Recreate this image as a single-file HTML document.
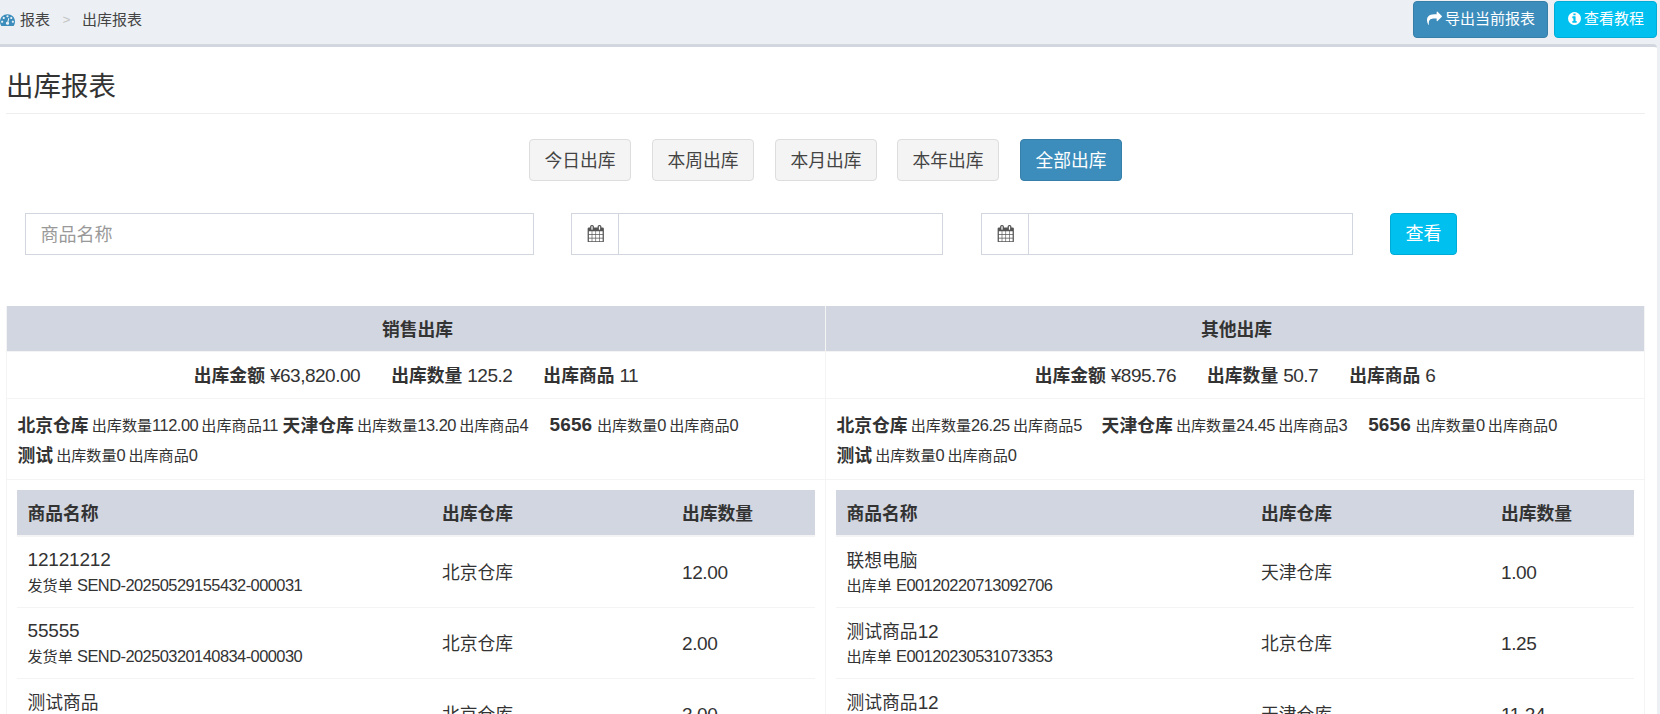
<!DOCTYPE html>
<html lang="zh-CN">
<head>
<meta charset="utf-8">
<title>出库报表</title>
<style>
*{box-sizing:border-box;}
html,body{margin:0;padding:0;}
body{width:1660px;height:714px;overflow:hidden;background:#ecf0f5;color:#333;
  font-family:"Liberation Sans","Noto Sans CJK SC",sans-serif;font-size:17.8px;position:relative;}
.abs{position:absolute;}
/* top bar */
#topbar{position:absolute;left:0;top:0;width:1660px;height:44px;background:#ecf0f5;}
#crumb{position:absolute;left:0;top:0;height:40px;line-height:40px;font-size:15px;color:#444;white-space:nowrap;}
#crumb span{position:absolute;top:0;}
.tbtn{position:absolute;top:1px;height:37px;border-radius:4px;color:#fff;font-size:15px;line-height:35px;white-space:nowrap;border:1px solid transparent;}
#b1{left:1413px;width:135px;background:#3c8dbc;border-color:#367fa9;}
#b2{left:1554px;width:103px;background:#00c0ef;border-color:#00acd6;}
/* content */
#content{position:absolute;left:0;top:44px;width:1657px;height:680px;background:#fff;border-top:3px solid #d2d6de;border-top-right-radius:4px;}
#title{position:absolute;left:6px;top:68px;font-size:27.5px;line-height:38px;color:#333;white-space:nowrap;}
#hr{position:absolute;left:6px;top:113px;width:1639px;height:1px;background:#eee;}
.fbtn{position:absolute;top:139px;width:102px;height:42px;border:1px solid #ddd;border-radius:4px;background:#f4f4f4;color:#444;font-size:17.8px;line-height:42px;text-align:center;white-space:nowrap;}
.fbtn.on{background:#3c8dbc;border-color:#367fa9;color:#fff;}
.inp{position:absolute;top:213px;height:42px;border:1px solid #d2d6de;background:#fff;}
.addon{position:absolute;top:213px;height:42px;width:48px;border:1px solid #d2d6de;border-right:0;background:#fff;}
#go{position:absolute;left:1390px;top:213px;width:67px;height:42px;border-radius:4px;background:#00c0ef;border:1px solid #00acd6;color:#fff;font-size:18px;line-height:40px;text-align:center;}
/* tables */
.panel{position:absolute;top:306px;height:420px;background:#fff;}
.ph{position:absolute;left:0;top:0;width:100%;padding-left:3px;height:46px;border-bottom:1px solid #f4f4f4;background:#d2d6e0;font-weight:bold;font-size:17.8px;line-height:48px;text-align:center;color:#333;}
.sum{position:absolute;left:0;top:47px;width:100%;height:46px;line-height:46px;text-align:center;font-size:17.8px;white-space:nowrap;}
i{font-style:normal;font-size:1.07em;letter-spacing:-.4px;} .sum i{letter-spacing:-.5px;}
.sum .g{display:inline-block;width:31px;}
.line{position:absolute;left:0;width:100%;height:1px;background:#f4f4f4;}
.vl{position:absolute;top:306px;width:1px;height:420px;background:#f4f4f4;}
.wh{position:absolute;font-size:15.1px;word-spacing:-1px;line-height:30px;white-space:nowrap;}
.wh b{font-size:17.8px;position:relative;top:.8px;} .wh i{font-size:1.09em;letter-spacing:-.5px;} .wh b.n{font-size:19px;letter-spacing:.1px;margin-right:1.5px;top:-.3px;}
.it{position:absolute;left:10px;top:184px;right:10px;height:240px;}
.ith{position:absolute;left:0;top:0;width:100%;height:47px;box-sizing:border-box;border-bottom:2px solid #f4f4f4;background:#d2d6e0;font-weight:bold;line-height:49px;}
.ith span,.row span{position:absolute;white-space:nowrap;}
.row{position:absolute;left:0;width:100%;height:71px;border-top:1px solid #f4f4f4;}
.c1{left:10.5px;} .c2{left:425px;} .c3{left:665px;}
.row .n{top:9.5px;line-height:25px;} .row .k{top:12.4px;} .row .k2{top:11.2px;} .row .c3.m{top:22.7px;} .row .k i{letter-spacing:0;}
.row .s{top:36.7px;font-size:15.1px;line-height:22px;} .row .s i{font-size:1.09em;letter-spacing:-.55px;} .row .n i{letter-spacing:-.2px;}
.row .m{top:24px;line-height:25px;}
</style>
</head>
<body>
<div id="topbar">
  <div id="crumb">
    <svg class="abs" style="left:0;top:11.9px" width="15" height="15" viewBox="0 0 1792 1792"><path fill="#3c8dbc" d="M384 1152q0-53-37.500-90.500t-90.500-37.500-90.500 37.500-37.500 90.500 37.500 90.500 90.500 37.500 90.500-37.500 37.500-90.500zm192-448q0-53-37.500-90.500t-90.500-37.500-90.500 37.500-37.500 90.500 37.500 90.500 90.500 37.500 90.500-37.500 37.500-90.500zm428 481l101-382q6-26-7.500-48.500t-38.500-29.500-48 6.500-30 39.500l-101 382q-60 5-107 43.500t-63 98.500q-20 77 20 146t117 89 146-20 89-117q16-60-6-117t-72-91zm660-33q0-53-37.500-90.500t-90.500-37.500-90.500 37.500-37.500 90.500 37.500 90.500 90.500 37.500 90.500-37.500 37.500-90.500zm-640-640q0-53-37.500-90.500t-90.500-37.500-90.500 37.500-37.500 90.500 37.500 90.500 90.500 37.500 90.500-37.500 37.500-90.500zm448 192q0-53-37.500-90.500t-90.500-37.500-90.500 37.500-37.500 90.500 37.500 90.500 90.500 37.500 90.500-37.500 37.500-90.500zm320 448q0 261-141 483-19 29-54 29h-1402q-35 0-54-29-141-221-141-483 0-182 71-348t191-286 286-191 348-71 348 71 286 191 191 286 71 348z"/></svg>
    <span style="left:20px">报表</span>
    <span style="left:62.5px;color:#c4c4c4;font-size:13.5px;">&gt;</span>
    <span style="left:82px">出库报表</span>
  </div>
  <div class="tbtn" id="b1"><svg class="abs" style="left:13.2px;top:8.8px" width="15" height="15" viewBox="0 0 1792 1792"><path fill="#fff" d="M1792 640q0 26-19 45l-512 512q-19 19-45 19t-45-19-19-45v-256h-224q-98 0-175.500 6t-154 21.500-133 42.500-105.500 69.500-80 101-48.500 138.500-17.500 181q0 55 5 123 0 6 2.500 23.500t2.500 26.500q0 15-8.500 25t-23.500 10q-16 0-28-17-7-9-13-22t-13.500-30-10.500-24q-127-285-127-451 0-199 53-333 162-403 875-403h224v-256q0-26 19-45t45-19 45 19l512 512q19 19 19 45z"/></svg><span class="abs" style="left:31px;top:-1px">导出当前报表</span></div>
  <div class="tbtn" id="b2"><svg class="abs" style="left:12.0px;top:8.9px" width="15" height="15" viewBox="0 0 1792 1792"><path fill="#fff" d="M1152 1376v-160q0-14-9-23t-23-9h-96v-512q0-14-9-23t-23-9h-320q-14 0-23 9t-9 23v160q0 14 9 23t23 9h96v320h-96q-14 0-23 9t-9 23v160q0 14 9 23t23 9h448q14 0 23-9t9-23zm-128-896v-160q0-14-9-23t-23-9h-192q-14 0-23 9t-9 23v160q0 14 9 23t23 9h192q14 0 23-9t9-23zm640 416q0 209-103 385.500t-279.500 279.500-385.500 103-385.500-103-279.500-279.500-103-385.500 103-385.500 279.500-279.500 385.500-103 385.500 103 279.500 279.500 103 385.500z"/></svg><span class="abs" style="left:29px;top:-1px">查看教程</span></div>
</div>
<div id="content"></div>
<div id="title">出库报表</div>
<div id="hr"></div>

<div class="fbtn" style="left:529px">今日出库</div>
<div class="fbtn" style="left:652px">本周出库</div>
<div class="fbtn" style="left:775px">本月出库</div>
<div class="fbtn" style="left:897px">本年出库</div>
<div class="fbtn on" style="left:1020px">全部出库</div>

<div class="inp" style="left:25px;width:509px;"><span class="abs" style="left:14.5px;top:1px;line-height:40px;color:#999;font-size:18px;white-space:nowrap;">商品名称</span></div>
<div class="addon" style="left:571px"><svg class="abs" style="left:14.75px;top:10.7px" width="17.5" height="17.5" viewBox="0 0 1792 1792"><path fill="#555" d="M192 1664h288v-288h-288v288zm352 0h320v-288h-320v288zm-352-352h288v-320h-288v320zm352 0h320v-320h-320v320zm-352-384h288v-288h-288v288zm736 736h320v-288h-320v288zm-384-736h320v-288h-320v288zm768 736h288v-288h-288v288zm-384-352h320v-320h-320v320zm-352-864v-288q0-13-9.500-22.500t-22.500-9.500h-64q-13 0-22.500 9.500t-9.500 22.500v288q0 13 9.500 22.500t22.500 9.500h64q13 0 22.500-9.500t9.500-22.500zm736 864h288v-320h-288v320zm-384-384h320v-288h-320v288zm384 0h288v-288h-288v288zm32-480v-288q0-13-9.500-22.500t-22.500-9.500h-64q-13 0-22.500 9.500t-9.500 22.500v288q0 13 9.500 22.500t22.500 9.500h64q13 0 22.500-9.500t9.500-22.500zm384-64v1280q0 52-38 90t-90 38h-1408q-52 0-90-38t-38-90v-1280q0-52 38-90t90-38h128v-96q0-66 47-113t113-47h64q66 0 113 47t47 113v96h384v-96q0-66 47-113t113-47h64q66 0 113 47t47 113v96h128q52 0 90 38t38 90z"/></svg></div><div class="inp" style="left:618px;width:325px;"></div>
<div class="addon" style="left:981px"><svg class="abs" style="left:14.75px;top:10.7px" width="17.5" height="17.5" viewBox="0 0 1792 1792"><path fill="#555" d="M192 1664h288v-288h-288v288zm352 0h320v-288h-320v288zm-352-352h288v-320h-288v320zm352 0h320v-320h-320v320zm-352-384h288v-288h-288v288zm736 736h320v-288h-320v288zm-384-736h320v-288h-320v288zm768 736h288v-288h-288v288zm-384-352h320v-320h-320v320zm-352-864v-288q0-13-9.500-22.500t-22.500-9.500h-64q-13 0-22.500 9.500t-9.500 22.500v288q0 13 9.500 22.500t22.500 9.500h64q13 0 22.500-9.500t9.500-22.500zm736 864h288v-320h-288v320zm-384-384h320v-288h-320v288zm384 0h288v-288h-288v288zm32-480v-288q0-13-9.500-22.500t-22.500-9.500h-64q-13 0-22.500 9.500t-9.500 22.500v288q0 13 9.500 22.500t22.500 9.500h64q13 0 22.500-9.500t9.500-22.500zm384-64v1280q0 52-38 90t-90 38h-1408q-52 0-90-38t-38-90v-1280q0-52 38-90t90-38h128v-96q0-66 47-113t113-47h64q66 0 113 47t47 113v96h384v-96q0-66 47-113t113-47h64q66 0 113 47t47 113v96h128q52 0 90 38t38 90z"/></svg></div><div class="inp" style="left:1028px;width:325px;"></div>
<div id="go">查看</div>

<div class="vl" style="left:6px"></div><div class="vl" style="left:825px"></div><div class="vl" style="left:1644px"></div>
<!-- left panel -->
<div class="panel" style="left:7px;width:818px;">
  <div class="ph">销售出库</div>
  <div class="sum"><b>出库金额</b> <i>¥63,820.00</i><span class="g"></span><b>出库数量</b> <i>125.2</i><span class="g"></span><b>出库商品</b> <i>11</i></div>
  <div class="line" style="top:92px"></div>
  <div class="wh" style="left:10.4px;top:103.9px"><b>北京仓库</b> 出库数量<i>112.00</i> 出库商品<i>11</i></div>
  <div class="wh" style="left:275.6px;top:103.9px"><b>天津仓库</b> 出库数量<i>13.20</i> 出库商品<i>4</i></div>
  <div class="wh" style="left:542.6px;top:103.9px"><b class="n">5656</b> 出库数量<i>0</i> 出库商品<i>0</i></div>
  <div class="wh" style="left:10.4px;top:133.9px"><b>测试</b> 出库数量<i>0</i> 出库商品<i>0</i></div>
  <div class="line" style="top:173px"></div>
  <div class="it">
    <div class="ith"><span class="c1">商品名称</span><span class="c2">出库仓库</span><span class="c3">出库数量</span></div>
    <div class="row" style="top:46px"><span class="c1 n"><i>12121212</i></span><span class="c1 s">发货单 <i>SEND-20250529155432-000031</i></span><span class="c2 m">北京仓库</span><span class="c3 m"><i>12.00</i></span></div>
    <div class="row" style="top:117px"><span class="c1 n"><i>55555</i></span><span class="c1 s">发货单 <i>SEND-20250320140834-000030</i></span><span class="c2 m">北京仓库</span><span class="c3 m"><i>2.00</i></span></div>
    <div class="row" style="top:188px"><span class="c1 n k">测试商品</span><span class="c1 s">发货单 <i>SEND-20250320140834-000030</i></span><span class="c2 m">北京仓库</span><span class="c3 m"><i>3.00</i></span></div>
  </div>
</div>
<!-- right panel -->
<div class="panel" style="left:826px;width:818px;">
  <div class="ph">其他出库</div>
  <div class="sum"><b>出库金额</b> <i>¥895.76</i><span class="g"></span><b>出库数量</b> <i>50.7</i><span class="g"></span><b>出库商品</b> <i>6</i></div>
  <div class="line" style="top:92px"></div>
  <div class="wh" style="left:10.4px;top:103.9px"><b>北京仓库</b> 出库数量<i>26.25</i> 出库商品<i>5</i></div>
  <div class="wh" style="left:275.6px;top:103.9px"><b>天津仓库</b> 出库数量<i>24.45</i> 出库商品<i>3</i></div>
  <div class="wh" style="left:542.2px;top:103.9px"><b class="n">5656</b> 出库数量<i>0</i> 出库商品<i>0</i></div>
  <div class="wh" style="left:10.4px;top:133.9px"><b>测试</b> 出库数量<i>0</i> 出库商品<i>0</i></div>
  <div class="line" style="top:173px"></div>
  <div class="it">
    <div class="ith"><span class="c1">商品名称</span><span class="c2">出库仓库</span><span class="c3">出库数量</span></div>
    <div class="row" style="top:46px"><span class="c1 n k">联想电脑</span><span class="c1 s">出库单 <i>E00120220713092706</i></span><span class="c2 m">天津仓库</span><span class="c3 m"><i>1.00</i></span></div>
    <div class="row" style="top:117px"><span class="c1 n k k2">测试商品<i>12</i></span><span class="c1 s">出库单 <i>E00120230531073353</i></span><span class="c2 m">北京仓库</span><span class="c3 m"><i>1.25</i></span></div>
    <div class="row" style="top:188px"><span class="c1 n k k2">测试商品<i>12</i></span><span class="c1 s">出库单 <i>E00120230531073353</i></span><span class="c2 m">天津仓库</span><span class="c3 m"><i>11.24</i></span></div>
  </div>
</div>
</body>
</html>
